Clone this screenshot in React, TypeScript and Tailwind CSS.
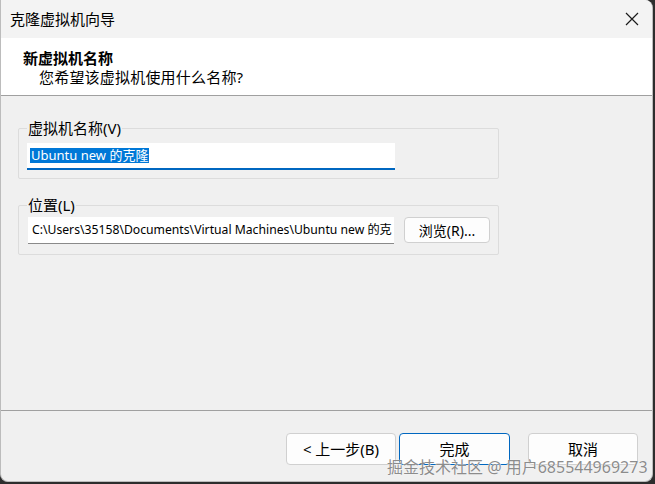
import React from "react";

const font = { fontFamily: '"Segoe UI", "Noto Sans", "Noto Sans CJK SC", sans-serif' };

export default function App() {
  return (
    <div className="w-[655px] h-[484px] bg-[#2d2d2d] overflow-hidden" style={font}>
      <div className="relative w-[653px] h-[482px] bg-[#f0f0f0] rounded-tr-[8px] rounded-br-[8px] rounded-bl-[8px] border border-[#bcbcbc] border-t-0 flex flex-col overflow-hidden text-[#000]">
        {/* title bar */}
        <div className="h-[38px] bg-[#f3f3f3] flex items-center justify-between pl-[9px] pr-[12px] shrink-0">
          <span className="text-[15px] leading-none">克隆虚拟机向导</span>
          <svg width="14" height="14" viewBox="0 0 14 14" className="mr-[1px]">
            <path d="M1 1 L13 13 M13 1 L1 13" stroke="#1a1a1a" strokeWidth="1.2" fill="none" />
          </svg>
        </div>
        {/* header */}
        <div className="h-[58px] bg-white border-b border-[#a0a0a0] shrink-0 flex flex-col justify-center pl-[22px] pt-[2px]">
          <div className="text-[15px] font-bold leading-[19px]">新虚拟机名称</div>
          <div className="text-[15px] leading-[19px] pl-[16px] tracking-[0.2px]">您希望该虚拟机使用什么名称?</div>
        </div>
        {/* body */}
        <div className="flex-1 px-[17px] pt-[32px]">
          <div className="w-[481px] h-[51px] border border-[#dcdcdc] rounded-[2px] relative">
            <span className="absolute left-[8px] top-[-11px] bg-[#f0f0f0] px-[1px] text-[15px] leading-[20px]">虚拟机名称(V)</span>
            <div className="absolute left-[8px] top-[14px] w-[368px] h-[27px] bg-white border-b-2 border-[#0067c0] flex items-center pl-[3px]">
              <span className="bg-[#0078d7] text-white text-[13px] leading-[15px] px-[1px] whitespace-nowrap">Ubuntu new 的克隆</span>
            </div>
          </div>
          <div className="mt-[26px] w-[481px] h-[50px] border border-[#dcdcdc] rounded-[2px] relative">
            <span className="absolute left-[8px] top-[-11px] bg-[#f0f0f0] px-[1px] text-[15px] leading-[20px]">位置(L)</span>
            <div className="absolute left-[9px] top-[11px] w-[366px] h-[27px] bg-white border-b border-[#8a8a8a] flex items-center pl-[4px] overflow-hidden">
              <span className="text-[12.2px] whitespace-nowrap leading-none">C:\Users\35158\Documents\Virtual Machines\Ubuntu new 的克</span>
            </div>
            <button className="absolute left-[385px] top-[11px] w-[86px] h-[26px] bg-[#fdfdfd] border border-[#d0d0d0] rounded-[4px] text-[14px] flex items-center justify-center">
              浏览(R)...
            </button>
          </div>
        </div>
        {/* footer */}
        <div className="h-[71px] border-t border-[#a0a0a0] shrink-0 relative">
          <div className="flex pl-[285px] pt-[22px]">
            <button className="w-[110px] h-[32px] bg-[#fdfdfd] border border-[#d0d0d0] rounded-[4px] text-[15px] flex items-center justify-center">&lt; 上一步(B)</button>
            <button className="ml-[3px] w-[111px] h-[32px] bg-[#fdfdfd] border border-[#0067c0] rounded-[4px] text-[15px] flex items-center justify-center">完成</button>
            <button className="ml-[18px] w-[110px] h-[32px] bg-[#fdfdfd] border border-[#d0d0d0] rounded-[4px] text-[15px] flex items-center justify-center">取消</button>
          </div>
        </div>
        <span
          className="absolute left-[386px] top-[456px] text-[16px] leading-[22px] text-[#8c8c8c] whitespace-nowrap"
          style={{ fontFamily: '"Noto Sans", "Noto Sans CJK SC", sans-serif', textShadow: "0 0 1px #fff, 0 0 1px #fff" }}
        >
          掘金技术社区 @ 用户685544969273
        </span>
      </div>
    </div>
  );
}
